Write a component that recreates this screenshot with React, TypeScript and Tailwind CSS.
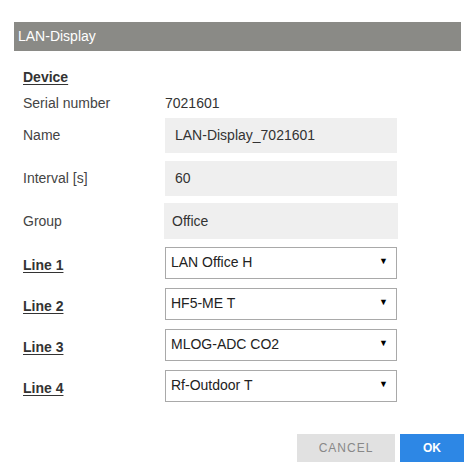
import React from 'react';

const font = { fontFamily: '"Liberation Sans", Arial, sans-serif' };

function Field({ label, value, wide }: { label: string; value: string; wide?: boolean }) {
  return (
    <div className="flex items-center">
      <div className="w-[142px] text-[14px] text-[#444]">{label}</div>
      <div
        className={`flex items-center bg-[#efefef] text-[14px] text-[#333] ${
          wide ? '-ml-[1px] h-[36px] w-[234px] pl-[8px]' : 'h-[35px] w-[232px] pl-[10px]'
        }`}
      >
        {value}
      </div>
    </div>
  );
}

function LineSelect({ label, value }: { label: string; value: string }) {
  return (
    <div className="flex items-center">
      <div className="w-[142px] pt-[5px] text-[14px] font-bold text-[#333] underline underline-offset-2">{label}</div>
      <div className="flex h-[32px] w-[232px] items-center justify-between border border-[#a9a9a9] bg-white pl-[5px] pr-[8px] text-[14px] text-[#222]">
        <span className="-mt-[1px]">{value}</span>
        <span className="-mt-[2px] text-[9px] text-black">▼</span>
      </div>
    </div>
  );
}

export default function App() {
  const lines = [
    { label: 'Line 1', value: 'LAN Office H' },
    { label: 'Line 2', value: 'HF5-ME T' },
    { label: 'Line 3', value: 'MLOG-ADC CO2' },
    { label: 'Line 4', value: 'Rf-Outdoor T' },
  ];

  return (
    <div className="h-[473px] w-[474px] bg-white pt-[22px] pl-[14px]" style={font}>
      <div className="flex h-[29px] w-[447px] items-center bg-[#8a8a86] pl-[4px] text-[14px] text-white">LAN-Display</div>

      <div className="pl-[9px]">
        <div className="mt-[16px] h-[20px] leading-[20px] text-[14px] font-bold text-[#333] underline underline-offset-2">Device</div>
        <div className="mt-[6px] flex h-[20px] items-center text-[14px]">
          <div className="w-[142px] text-[#444]">Serial number</div>
          <div className="text-[#333]">7021601</div>
        </div>

        <div className="mt-[5px] flex flex-col gap-[8px]">
          <Field label="Name" value="LAN-Display_7021601" />
          <Field label="Interval [s]" value="60" />
          <div className="-mt-[1px]">
            <Field label="Group" value="Office" wide />
          </div>
        </div>

        <div className="mt-[8px] flex flex-col gap-[9px]">
          {lines.map((l) => (
            <LineSelect key={l.label} label={l.label} value={l.value} />
          ))}
        </div>

        <div className="mt-[32px] flex w-[441px] justify-end gap-[5px]">
          <button className="h-[28px] w-[98px] bg-[#e1e1e1] text-[12px] tracking-[1px] text-[#888]">CANCEL</button>
          <button className="h-[28px] w-[64px] bg-[#2d87e5] text-[12px] font-bold text-white">OK</button>
        </div>
      </div>
    </div>
  );
}
